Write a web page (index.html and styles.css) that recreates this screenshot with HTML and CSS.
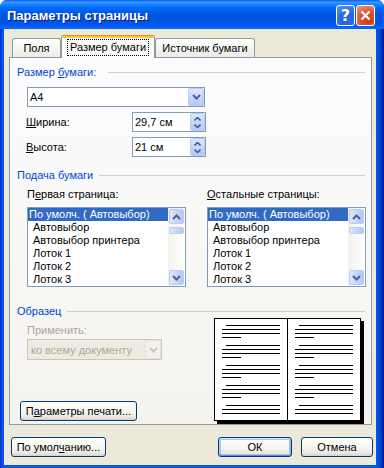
FILE: index.html
```html
<!DOCTYPE html>
<html lang="ru">
<head>
    <meta charset="UTF-8">
    <meta name="viewport" content="width=device-width, initial-scale=1.0">
    <title>Параметры страницы</title>
    <link rel="stylesheet" href="styles.css">
</head>
<body>
<div class="window">
    <div class="titlebar">
        <span class="title">Параметры страницы</span>
        <div class="caption-buttons">
            <div class="cap help">?</div>
            <div class="cap close">
                <svg width="11" height="11" viewBox="0 0 11 11"><path d="M1.5 1.5l8 8M9.5 1.5l-8 8" stroke="#fff" stroke-width="2.2" fill="none"/></svg>
            </div>
        </div>
    </div>
    <div class="client">
        <div class="tabs">
            <div class="tab tab-fields">Поля</div>
            <div class="tab active"><span class="focus">Размер бумаги</span></div>
            <div class="tab tab-source">Источник бумаги</div>
        </div>
        <div class="panel">
            <div class="group-title wide"><span>Размер <u>б</u>умаги:</span></div>
            <div class="combo size-combo">
                <span class="combo-text">A4</span>
                <span class="drop"><svg width="9" height="6" viewBox="0 0 9 6"><path d="M1 1l3.5 3.5L8 1" stroke="#4D6185" stroke-width="2" fill="none"/></svg></span>
            </div>
            <div class="field">
                <span class="field-label"><u>Ш</u>ирина:</span>
                <div class="spin">
                    <span class="spin-text">29,7 см</span>
                    <span class="spin-btn">
                        <svg width="7" height="4" viewBox="0 0 7 4"><path d="M0.5 3.5l3-3 3 3" stroke="#4D6185" stroke-width="1.6" fill="none"/></svg>
                        <svg width="7" height="4" viewBox="0 0 7 4"><path d="M0.5 0.5l3 3 3-3" stroke="#4D6185" stroke-width="1.6" fill="none"/></svg>
                    </span>
                </div>
            </div>
            <div class="field">
                <span class="field-label"><u>В</u>ысота:</span>
                <div class="spin">
                    <span class="spin-text">21 см</span>
                    <span class="spin-btn">
                        <svg width="7" height="4" viewBox="0 0 7 4"><path d="M0.5 3.5l3-3 3 3" stroke="#4D6185" stroke-width="1.6" fill="none"/></svg>
                        <svg width="7" height="4" viewBox="0 0 7 4"><path d="M0.5 0.5l3 3 3-3" stroke="#4D6185" stroke-width="1.6" fill="none"/></svg>
                    </span>
                </div>
            </div>

            <div class="group-title feed-title"><span>Подача бумаги</span></div>
            <div class="feeds">
                <div class="feed">
                    <div class="feed-label">П<u>е</u>рвая страница:</div>
                    <div class="list">
                        <ul>
                            <li class="selected">По умолч. ( Автовыбор)</li>
                            <li>Автовыбор</li>
                            <li>Автовыбор принтера</li>
                            <li>Лоток 1</li>
                            <li>Лоток 2</li>
                            <li>Лоток 3</li>
                        </ul>
                        <div class="scrollbar">
                            <span class="sb-btn"><svg width="9" height="6" viewBox="0 0 9 6"><path d="M1 5l3.5-3.5L8 5" stroke="#4D6185" stroke-width="2" fill="none"/></svg></span>
                            <span class="sb-thumb"></span>
                            <span class="sb-btn sb-down"><svg width="9" height="6" viewBox="0 0 9 6"><path d="M1 1l3.5 3.5L8 1" stroke="#4D6185" stroke-width="2" fill="none"/></svg></span>
                        </div>
                    </div>
                </div>
                <div class="feed">
                    <div class="feed-label"><u>О</u>стальные страницы:</div>
                    <div class="list">
                        <ul>
                            <li class="selected">По умолч. ( Автовыбор)</li>
                            <li>Автовыбор</li>
                            <li>Автовыбор принтера</li>
                            <li>Лоток 1</li>
                            <li>Лоток 2</li>
                            <li>Лоток 3</li>
                        </ul>
                        <div class="scrollbar">
                            <span class="sb-btn"><svg width="9" height="6" viewBox="0 0 9 6"><path d="M1 5l3.5-3.5L8 5" stroke="#4D6185" stroke-width="2" fill="none"/></svg></span>
                            <span class="sb-thumb"></span>
                            <span class="sb-btn sb-down"><svg width="9" height="6" viewBox="0 0 9 6"><path d="M1 1l3.5 3.5L8 1" stroke="#4D6185" stroke-width="2" fill="none"/></svg></span>
                        </div>
                    </div>
                </div>
            </div>

            <div class="group-title sample-title"><span>Образец</span></div>
            <div class="sample">
                <div class="apply">
                    <div class="apply-label">Применить:</div>
                    <div class="combo disabled">
                        <span class="combo-text">ко всему документу</span>
                        <span class="drop"><svg width="9" height="6" viewBox="0 0 9 6"><path d="M1 1l3.5 3.5L8 1" stroke="#C9C7BA" stroke-width="2" fill="none"/></svg></span>
                    </div>
                    <button class="btn print-btn">П<u>а</u>раметры печати...</button>
                </div>
                <svg class="preview" width="150" height="106" viewBox="0 0 150 106" shape-rendering="crispEdges">
                    <rect x="3" y="3" width="147" height="103" fill="#000"/>
                    <rect x="0.5" y="0.5" width="146" height="102" fill="#fff" stroke="#000"/>
                    <rect x="73" y="0" width="1" height="103" fill="#000"/>
                    <g id="lines" fill="#000">
                        <rect x="12" y="7" width="54" height="1"/><rect x="8" y="11" width="58" height="1"/><rect x="8" y="15" width="58" height="1"/><rect x="8" y="19" width="19" height="1"/>
                        <rect x="12" y="27" width="54" height="1"/><rect x="8" y="31" width="58" height="1"/><rect x="8" y="35" width="58" height="1"/><rect x="8" y="39" width="19" height="1"/>
                        <rect x="12" y="47" width="54" height="1"/><rect x="8" y="51" width="58" height="1"/><rect x="8" y="55" width="58" height="1"/><rect x="8" y="59" width="19" height="1"/>
                        <rect x="12" y="67" width="54" height="1"/><rect x="8" y="71" width="58" height="1"/><rect x="8" y="75" width="58" height="1"/><rect x="8" y="79" width="19" height="1"/>
                        <rect x="12" y="87" width="54" height="1"/><rect x="8" y="91" width="58" height="1"/><rect x="8" y="95" width="58" height="1"/>
                    </g>
                    <use href="#lines" x="73"/>
                </svg>
            </div>
        </div>
        <div class="footer">
            <button class="btn default-btn">По умол<u>ч</u>анию...</button>
            <div class="footer-right">
                <button class="btn ok-btn">ОК</button>
                <button class="btn cancel-btn">Отмена</button>
            </div>
        </div>
    </div>
</div>
</body>
</html>
```

FILE: styles.css
```css
body {
    margin: 0;
    background: #ffffff;
    font-family: "Liberation Sans", Arial, sans-serif;
    font-size: 11px;
    color: #000;
}
.window {
    width: 384px;
    height: 468px;
    display: flex;
    flex-direction: column;
    background: linear-gradient(to right, #0019CF 0, #0841D6 1px, #0058EE 3px, #0058EE 376px, #0046D5 380px, #00138C 384px);
    border-radius: 7px 7px 0 0;
    overflow: hidden;
}
.titlebar {
    height: 29px;
    flex-shrink: 0;
    display: flex;
    align-items: center;
    justify-content: space-between;
    padding: 0 9px 0 7px;
    background: linear-gradient(#0058EE 0%, #3A93FF 7%, #288EFF 12%, #127DFF 18%, #036FFC 25%, #0262EE 35%, #0057E5 50%, #0054E3 65%, #0055EB 82%, #005BF5 90%, #026AFE 95%, #0062EF 100%);
}
.title {
    color: #fff;
    font-weight: bold;
    font-size: 13px;
    text-shadow: 1px 1px #0A1883;
    margin-top: 1px;
}
.caption-buttons {
    display: flex;
    gap: 1px;
    margin-top: 1px;
}
.cap {
    width: 19px;
    height: 21px;
    box-sizing: border-box;
    border: 1px solid #fff;
    border-radius: 3px;
    display: flex;
    align-items: center;
    justify-content: center;
    color: #fff;
}
.help {
    background: radial-gradient(circle at 70% 80%, #2B6BE8 0%, #2663E0 40%, #5C97F5 100%);
    font-weight: bold;
    font-size: 16px;
    font-family: "DejaVu Sans", sans-serif;
}
.close {
    background: radial-gradient(circle at 70% 80%, #C4401B 0%, #D7542D 45%, #EE9C80 100%);
}
.client {
    flex: 1;
    margin: 0 8px 3px 4px;
    background: #ECE9D8;
    padding-top: 6px;
    display: flex;
    flex-direction: column;
}
.tabs {
    display: flex;
    align-items: flex-end;
    height: 23px;
    padding-left: 8px;
    margin-bottom: -1px;
    position: relative;
    z-index: 1;
}
.tab {
    box-sizing: border-box;
    height: 19px;
    margin-bottom: 1px;
    border: 1px solid #919B9C;
    border-bottom: none;
    border-radius: 3px 3px 0 0;
    background: linear-gradient(#FFFFFF, #F3F3EF 60%, #ECEBE6);
    text-align: center;
    line-height: 18px;
}
.tab-fields {
    width: 49px;
}
.tab-source {
    width: 100px;
}
.tab.active {
    width: 94px;
    height: 23px;
    margin-bottom: 0;
    border-top: none;
    background: linear-gradient(#E68B2C 0, #E68B2C 1px, #FFC83C 1px, #FFC83C 3px, #FCFCFE 3px);
    padding-top: 5px;
    line-height: 13px;
}
.focus {
    display: inline-block;
    outline: 1px dotted #000;
    padding: 1px 2px;
}
.panel {
    box-sizing: border-box;
    height: 368px;
    width: 363px;
    margin-left: 5px;
    border: 1px solid #919B9C;
    background: linear-gradient(#FCFCFE, #F4F3EE);
    padding: 8px 6px 0 7px;
}
.group-title {
    display: flex;
    align-items: center;
    height: 13px;
    line-height: 13px;
    color: #0046D5;
}
.group-title::after {
    content: "";
    flex: 1;
    border-top: 1px solid #D0D0BF;
    margin-left: 6px;
}
.group-title.wide::after {
    margin-left: 12px;
}
.combo {
    box-sizing: border-box;
    display: flex;
    align-items: center;
    height: 20px;
    border: 1px solid #7F9DB9;
    background: #fff;
}
.combo-text {
    padding-left: 2px;
}
.drop {
    margin-left: auto;
    box-sizing: border-box;
    width: 16px;
    height: 18px;
    border: 1px solid #BACCF6;
    border-radius: 2px;
    background: linear-gradient(#DDE7FE, #C3D4FA 60%, #B4C8F6);
    display: flex;
    align-items: center;
    justify-content: center;
}
.size-combo {
    width: 178px;
    margin: 8px 0 0 10px;
}
.field {
    display: flex;
    align-items: center;
    height: 20px;
    margin-top: 5px;
    padding-left: 9px;
}
.field-label {
    width: 106px;
}
.spin {
    box-sizing: border-box;
    width: 74px;
    height: 20px;
    border: 1px solid #7F9DB9;
    background: #fff;
    display: flex;
    align-items: center;
}
.spin-text {
    padding-left: 2px;
}
.spin-btn {
    margin-left: auto;
    box-sizing: border-box;
    width: 15px;
    height: 18px;
    border: 1px solid #BACCF6;
    border-radius: 2px;
    background: linear-gradient(#DDE7FE, #C3D4FA 60%, #B4C8F6);
    display: flex;
    flex-direction: column;
    align-items: center;
    justify-content: center;
    gap: 3px;
}
.spin-btn svg {
    display: block;
}
.feed-title {
    margin-top: 12px;
}
.feeds {
    display: flex;
    gap: 21px;
    padding-left: 10px;
}
.feed-label {
    margin-top: 6px;
    height: 13px;
    line-height: 13px;
}
.list {
    box-sizing: border-box;
    display: flex;
    width: 159px;
    height: 80px;
    margin-top: 6px;
    border: 1px solid #7F9DB9;
    background: #fff;
}
.list ul {
    flex: 1;
    margin: 0;
    padding: 0;
    list-style: none;
    overflow: hidden;
}
.list li {
    height: 13px;
    line-height: 13px;
    padding-left: 5px;
    white-space: nowrap;
}
.list li.selected {
    background: #316AC5;
    color: #fff;
    padding-left: 1px;
}
.scrollbar {
    width: 17px;
    display: flex;
    flex-direction: column;
    align-items: center;
    background: linear-gradient(to right, #F3F1EC, #FEFEFB);
}
.sb-btn, .sb-thumb {
    box-sizing: border-box;
    width: 15px;
    border: 1px solid #BACCF6;
    border-radius: 2px;
    background: linear-gradient(to right, #DDE7FE, #C3D4FA 60%, #B4C8F6);
    display: flex;
    align-items: center;
    justify-content: center;
}
.sb-btn {
    height: 15px;
    margin-top: 1px;
}
.sb-thumb {
    height: 7px;
    margin-top: 3px;
}
.sb-down {
    margin-top: auto;
    margin-bottom: 1px;
}
.sample-title {
    margin-top: 18px;
}
.sample {
    display: flex;
    align-items: flex-start;
    height: 104px;
}
.apply {
    display: flex;
    flex-direction: column;
    align-items: flex-start;
    height: 104px;
}
.apply-label {
    margin: 6px 0 0 10px;
    height: 13px;
    line-height: 13px;
    color: #ACA899;
}
.combo.disabled {
    width: 135px;
    height: 21px;
    margin: 2px 0 0 10px;
    border-color: #C9C7BA;
    background: #EDEBE0;
    color: #ACA899;
}
.combo.disabled .combo-text {
    padding-left: 3px;
}
.combo.disabled .drop {
    height: 19px;
    border-color: #E6E4DA;
    background: #F2F1EA;
}
.preview {
    display: block;
    margin-left: auto;
    margin-right: 1px;
}
.btn {
    box-sizing: border-box;
    height: 20px;
    padding: 0;
    border: 1px solid #003C74;
    border-radius: 3px;
    background: linear-gradient(#FFFFFF, #F5F5F1 55%, #E9E7DF 85%, #D6D0C5);
    font-family: "Liberation Sans", Arial, sans-serif;
    font-size: 11px;
    color: #000;
}
.print-btn {
    width: 117px;
    margin: auto 0 1px 3px;
}
.footer {
    display: flex;
    justify-content: space-between;
    margin-top: 12px;
    padding: 0 3px 0 7px;
}
.default-btn {
    width: 95px;
}
.footer-right {
    display: flex;
    gap: 9px;
}
.ok-btn {
    width: 74px;
    box-shadow: inset 0 1px 0 #CEE7FF, inset 0 -1px 0 #6982EE, inset 1px 0 0 #B8D2F5, inset -1px 0 0 #8FAFE8, inset 0 0 0 2px #A9C6F2;
}
.cancel-btn {
    width: 72px;
}
```
